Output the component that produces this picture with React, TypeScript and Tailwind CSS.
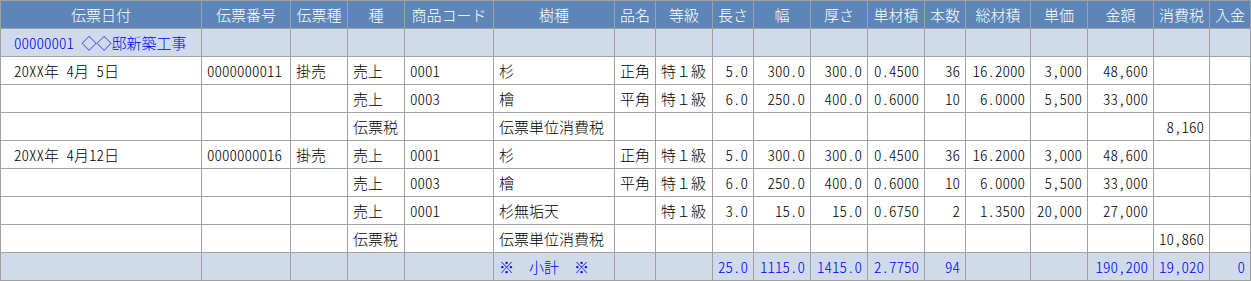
import React from "react";

const headers = [
  "伝票日付", "伝票番号", "伝票種", "種", "商品コード", "樹種", "品名", "等級",
  "長さ", "幅", "厚さ", "単材積", "本数", "総材積", "単価", "金額", "消費税", "入金",
];

type Row = { kind: "group" | "data" | "sub"; cells: string[] };

const E = "";
const GROUP = "__group__";
const rows: Row[] = [
  { kind: "group", cells: [GROUP, E, E, E, E, E, E, E, E, E, E, E, E, E, E, E, E, E] },
  { kind: "data", cells: ["20XX年 4月 5日", "0000000011", "掛売", "売上", "0001", "杉", "正角", "特１級", "5.0", "300.0", "300.0", "0.4500", "36", "16.2000", "3,000", "48,600", E, E] },
  { kind: "data", cells: [E, E, E, "売上", "0003", "檜", "平角", "特１級", "6.0", "250.0", "400.0", "0.6000", "10", "6.0000", "5,500", "33,000", E, E] },
  { kind: "data", cells: [E, E, E, "伝票税", E, "伝票単位消費税", E, E, E, E, E, E, E, E, E, E, "8,160", E] },
  { kind: "data", cells: ["20XX年 4月12日", "0000000016", "掛売", "売上", "0001", "杉", "正角", "特１級", "5.0", "300.0", "300.0", "0.4500", "36", "16.2000", "3,000", "48,600", E, E] },
  { kind: "data", cells: [E, E, E, "売上", "0003", "檜", "平角", "特１級", "6.0", "250.0", "400.0", "0.6000", "10", "6.0000", "5,500", "33,000", E, E] },
  { kind: "data", cells: [E, E, E, "売上", "0001", "杉無垢天", E, "特１級", "3.0", "15.0", "15.0", "0.6750", "2", "1.3500", "20,000", "27,000", E, E] },
  { kind: "data", cells: [E, E, E, "伝票税", E, "伝票単位消費税", E, E, E, E, E, E, E, E, E, E, "10,860", E] },
  { kind: "sub", cells: [E, E, E, E, E, "※　小計　※", E, E, "25.0", "1115.0", "1415.0", "2.7750", "94", E, E, "190,200", "19,020", "0"] },
];

const fullWidth = (s: string) => /[１　]/.test(s);

function Content({ c }: { c: string }) {
  if (c === GROUP) {
    return (
      <span>
        <span className="[font-feature-settings:'hwid']">00000001 </span>
        <span className="[font-feature-settings:normal]">◇◇邸新築工事</span>
      </span>
    );
  }
  if (fullWidth(c)) {
    return <span className="[font-feature-settings:normal]">{c}</span>;
  }
  return <span className="[font-feature-settings:'hwid']">{c}</span>;
}

export default function App() {
  return (
    <div
      className="w-[1251px] h-[281px] bg-[#a0a0a0] p-px grid gap-px grid-cols-[200px_88px_56px_56px_88px_120px_40px_56px_40px_56px_56px_56px_40px_64px_56px_65px_55px_40px] auto-rows-[27px] text-[15px] leading-none font-light [font-family:'Noto_Sans_CJK_JP',sans-serif]"
    >
      {headers.map((h, i) => (
        <div
          key={"h" + i}
          className="bg-[#5c86b8] text-white flex items-center justify-center whitespace-nowrap overflow-hidden"
        >
          {h}
        </div>
      ))}
      {rows.map((r, ri) =>
        r.cells.map((c, ci) => {
          const right = ci >= 8;
          const bg = r.kind === "data" ? "bg-white" : "bg-[#cfdaea]";
          const color = r.kind === "data" ? "text-black" : "text-[#0000ff]";
          const pad = ci === 0 ? "pl-[13px] pr-[5px]" : "px-[5px]";
          return (
            <div
              key={ri + "-" + ci}
              className={`${bg} ${color} ${pad} flex items-center whitespace-pre overflow-hidden ${right ? "justify-end" : "justify-start"}`}
            >
              {c ? <Content c={c} /> : null}
            </div>
          );
        })
      )}
    </div>
  );
}
